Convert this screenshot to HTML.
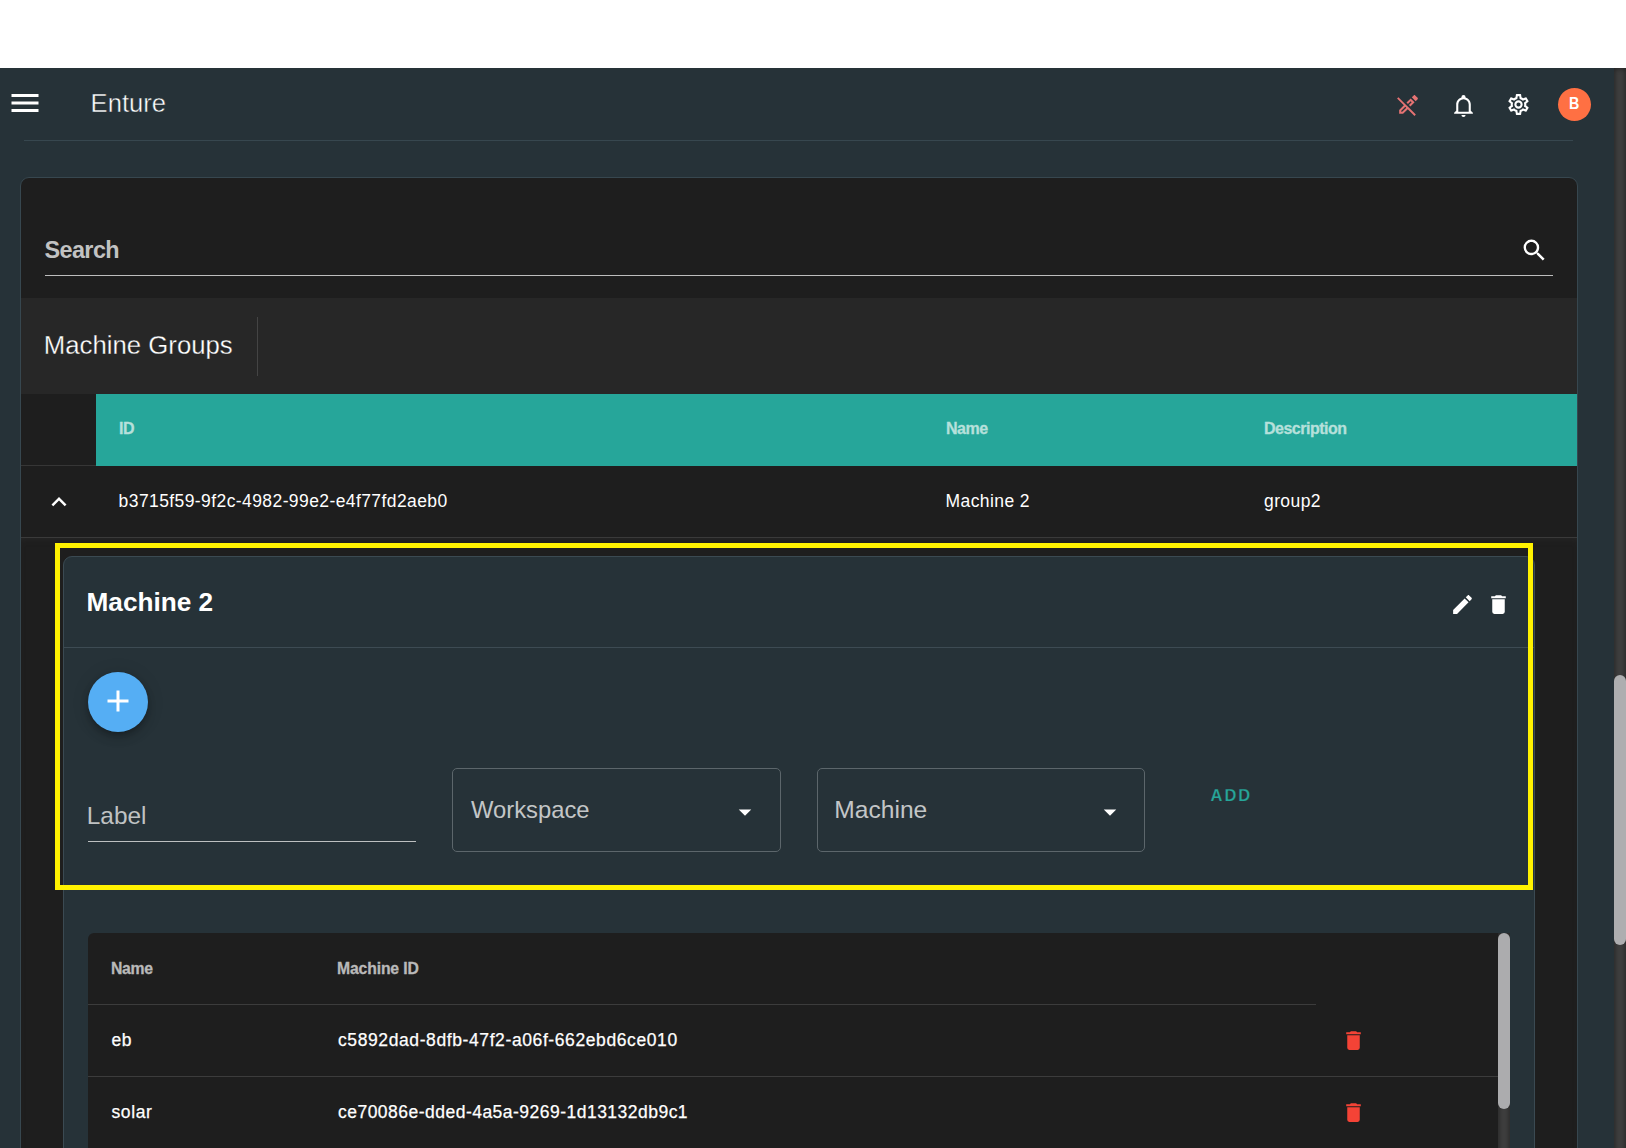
<!DOCTYPE html>
<html><head><meta charset="utf-8">
<style>
*{box-sizing:border-box;margin:0;padding:0}
html,body{width:1626px;height:1148px;overflow:hidden;background:#fff;font-family:"Liberation Sans",sans-serif;}
.abs{position:absolute}
#app{position:absolute;left:0;top:68px;width:1626px;height:1080px;background:#263238;overflow:hidden}
.t{position:absolute;white-space:nowrap;line-height:1}
svg{position:absolute;display:block}
</style></head><body>
<div id="app"></div>

<!-- page scrollbar -->
<div class="abs" id="ptrack" style="left:1614px;top:68px;width:12px;height:1090px;background:#3f3f3f;box-shadow:inset 0 0 6px rgba(0,0,0,.55)"></div>
<div class="abs" id="pthumb" style="left:1614px;top:675px;width:12px;height:270px;background:#aeaeb0;border-radius:6px"></div>

<!-- app bar -->
<svg id="i_menu" style="left:7.1px;top:85.1px" width="36" height="36" viewBox="0 0 24 24"><path fill="#fff" d="M3,6H21V8H3V6M3,11H21V13H3V11M3,16H21V18H3V16Z"/></svg>
<div class="t" id="enture" style="-webkit-text-stroke:.45px #263238;left:90.6px;top:90.5px;font-size:25.6px;color:#fff">Enture</div>
<div class="abs" style="left:24px;top:140px;width:1549px;height:1px;background:#37474f"></div>

<!-- main card -->
<div class="abs" id="card" style="left:20px;top:177px;width:1558px;height:980px;background:#1e1e1e;border:1px solid #37474f;border-radius:9px;overflow:hidden"></div>
<div class="t" id="search" style="left:44.4px;top:238.7px;font-size:23.4px;letter-spacing:-.55px;font-weight:bold;color:#c2c2c2">Search</div>
<div class="abs" style="left:45px;top:275px;width:1508px;height:1px;background:#bdbdbd"></div>

<!-- toolbar -->
<div class="abs" style="left:21px;top:298px;width:1556px;height:96px;background:#272727"></div>
<div class="t" id="mg" style="-webkit-text-stroke:.3px #272727;left:43.8px;top:332.7px;font-size:25.76px;color:#fff">Machine Groups</div>
<div class="abs" style="left:257px;top:317px;width:1px;height:59px;background:#444"></div>

<!-- table header -->
<div class="abs" style="left:96px;top:394px;width:1481px;height:72px;background:#26a69a"></div>
<div class="t" id="th1" style="-webkit-text-stroke:.3px #b6e0db;left:119px;top:420.6px;font-size:16px;letter-spacing:-.5px;font-weight:bold;color:#b6e0db">ID</div>
<div class="t" id="th2" style="-webkit-text-stroke:.3px #b6e0db;left:946px;top:420.6px;font-size:16px;letter-spacing:-.5px;font-weight:bold;color:#b6e0db">Name</div>
<div class="t" id="th3" style="-webkit-text-stroke:.3px #b6e0db;left:1264px;top:420.6px;font-size:16px;letter-spacing:-.5px;font-weight:bold;color:#b6e0db">Description</div>

<!-- row -->
<div class="t" id="rid" style="left:118.6px;top:492.5px;font-size:17.5px;letter-spacing:.41px;color:#fff">b3715f59-9f2c-4982-99e2-e4f77fd2aeb0</div>
<div class="t" id="rn" style="left:945.6px;top:492.5px;font-size:17.5px;letter-spacing:.4px;color:#fff">Machine 2</div>
<div class="t" id="rd" style="left:1264px;top:492.5px;font-size:17.5px;letter-spacing:.4px;color:#fff">group2</div>
<div class="abs" style="left:21px;top:537px;width:1556px;height:1px;background:#3a3a3a"></div>
<div class="abs" style="left:21px;top:465px;width:75px;height:1px;background:#363636"></div>


<!-- chevron up -->
<svg style="left:43.6px;top:487.4px" width="30" height="30" viewBox="0 0 24 24"><path fill="#fff" d="M7.41,15.41L12,10.83L16.59,15.41L18,14L12,8L6,14L7.41,15.41Z"/></svg>

<!-- expanded cell bg -->
<div class="abs" style="left:21px;top:538px;width:1556px;height:640px;box-shadow:inset 0 4px 8px -5px rgba(50,50,50,.75)"></div>
<div class="abs" id="inner" style="left:63px;top:556px;width:1472px;height:620px;background:#263238;border:1px solid #3b4a52;border-radius:9px"></div>
<div class="t" id="m2" style="left:86.5px;top:589px;font-size:26.2px;font-weight:bold;color:#fff">Machine 2</div>
<svg style="left:1449.5px;top:591.5px" width="25" height="25" viewBox="0 0 24 24"><path fill="#fff" d="M20.71,7.04C21.1,6.65 21.1,6 20.71,5.63L18.37,3.29C18,2.9 17.35,2.9 16.96,3.29L15.12,5.12L18.87,8.87M3,17.25V21H6.75L17.81,9.93L14.06,6.18L3,17.25Z"/></svg>
<svg style="left:1485.5px;top:591.5px" width="25" height="25" viewBox="0 0 24 24"><path fill="#fff" d="M19,4H15.5L14.5,3H9.5L8.5,4H5V6H19M6,19A2,2 0 0,0 8,21H16A2,2 0 0,0 18,19V7H6V19Z"/></svg>
<div class="abs" style="left:64px;top:647px;width:1470px;height:1px;background:#3d4b53"></div>

<!-- FAB -->
<div class="abs" style="left:88px;top:672px;width:60px;height:60px;border-radius:50%;background:#55aef4;box-shadow:0 3px 5px -1px rgba(0,0,0,.2),0 6px 10px 0 rgba(0,0,0,.14),0 1px 18px 0 rgba(0,0,0,.12)"></div>
<svg style="left:100px;top:683.1px" width="36" height="36" viewBox="0 0 24 24"><path fill="#fff" d="M19,13H13V19H11V13H5V11H11V5H13V11H19V13Z"/></svg>

<!-- Label field -->
<div class="t" id="lbl" style="left:86.8px;top:804px;font-size:24.4px;color:#bfc2c3">Label</div>
<div class="abs" style="left:88px;top:841px;width:328px;height:1px;background:#bdc0c1"></div>

<!-- selects -->
<div class="abs" style="left:452px;top:768px;width:329px;height:84px;border:1px solid #5c666b;border-radius:5px"></div>
<div class="t" id="ws" style="left:471px;top:798px;font-size:23.8px;color:#c3c6c7">Workspace</div>
<svg style="left:730.1px;top:797px" width="30" height="30" viewBox="0 0 24 24"><path fill="#fff" d="M7,10L12,15L17,10H7Z"/></svg>
<div class="abs" style="left:817px;top:768px;width:328px;height:84px;border:1px solid #5c666b;border-radius:5px"></div>
<div class="t" id="mc" style="left:834.3px;top:798px;font-size:24.6px;color:#c3c6c7">Machine</div>
<svg style="left:1094.8px;top:797px" width="30" height="30" viewBox="0 0 24 24"><path fill="#fff" d="M7,10L12,15L17,10H7Z"/></svg>
<div class="t" id="add" style="-webkit-text-stroke:.25px #263238;left:1210.5px;top:787px;font-size:16.5px;font-weight:bold;letter-spacing:2px;color:#26a69a">ADD</div>

<!-- inner table -->
<div class="abs" style="left:88px;top:933px;width:1422px;height:230px;background:#1e1e1e;border-radius:6px 6px 0 0"></div>
<div class="t" id="hn" style="-webkit-text-stroke:.3px #b9b9b9;left:111px;top:960.5px;font-size:15.75px;letter-spacing:-.3px;font-weight:bold;color:#b9b9b9">Name</div>
<div class="t" id="hm" style="-webkit-text-stroke:.3px #b9b9b9;left:337px;top:960.5px;font-size:15.75px;letter-spacing:-.15px;font-weight:bold;color:#b9b9b9">Machine ID</div>
<div class="abs" style="left:88px;top:1004px;width:1228px;height:1px;background:#3c3c3c"></div>
<div class="t" id="r1a" style="left:111.5px;top:1032px;font-size:17.5px;letter-spacing:.6px;-webkit-text-stroke:.25px #fff;color:#fff">eb</div>
<div class="t" id="r1b" style="left:338px;top:1032px;font-size:17.5px;letter-spacing:.6px;-webkit-text-stroke:.25px #fff;color:#fff">c5892dad-8dfb-47f2-a06f-662ebd6ce010</div>
<svg style="left:1340.7px;top:1028.4px" width="25" height="25" viewBox="0 0 24 24"><path fill="#f44336" d="M19,4H15.5L14.5,3H9.5L8.5,4H5V6H19M6,19A2,2 0 0,0 8,21H16A2,2 0 0,0 18,19V7H6V19Z"/></svg>
<div class="abs" style="left:88px;top:1076px;width:1410px;height:1px;background:#3c3c3c"></div>
<div class="t" id="r2a" style="left:111.5px;top:1104px;font-size:17.5px;letter-spacing:.6px;-webkit-text-stroke:.25px #fff;color:#fff">solar</div>
<div class="t" id="r2b" style="left:338px;top:1104px;font-size:17.5px;letter-spacing:.48px;-webkit-text-stroke:.25px #fff;color:#fff">ce70086e-dded-4a5a-9269-1d13132db9c1</div>
<svg style="left:1340.7px;top:1100.4px" width="25" height="25" viewBox="0 0 24 24"><path fill="#f44336" d="M19,4H15.5L14.5,3H9.5L8.5,4H5V6H19M6,19A2,2 0 0,0 8,21H16A2,2 0 0,0 18,19V7H6V19Z"/></svg>
<!-- inner scrollbar -->
<div class="abs" style="left:1498px;top:933px;width:12px;height:240px;background:#3f3f3f;box-shadow:inset 0 0 6px rgba(0,0,0,.55)"></div>
<div class="abs" style="left:1498px;top:933px;width:12px;height:176px;background:#acacae;border-radius:6px"></div>

<!-- yellow highlight -->
<div class="abs" style="left:55px;top:543px;width:1478px;height:347px;border:5px solid #fff200"></div>

<!-- app bar icons -->
<svg id="i_pen" style="left:1394.8px;top:93.2px" width="25" height="25" viewBox="0 0 24 24"><path fill="#e57373" fill-rule="evenodd" d="M18.66,2C18.4,2 18.16,2.09 17.97,2.28L16.13,4.13L19.88,7.88L21.72,6.03C22.11,5.64 22.11,5 21.72,4.63L19.38,2.28C19.18,2.09 18.91,2 18.66,2M3.28,4L2,5.28L8.5,11.75L4,16.25V20H7.75L12.25,15.5L18.72,22L20,20.72L13.5,14.25L9.75,10.5L3.28,4M15.06,5.19L11.03,9.22L12.44,10.63L15.06,8L16,8.94L13.38,11.57L14.78,12.97L18.81,8.94L15.06,5.19M9.91,13.16L10.84,14.09L6.91,18H6V17.09L9.91,13.16Z"/></svg>
<svg id="i_bell" style="left:1451.1px;top:92.7px" width="25" height="25" viewBox="0 0 24 24"><path fill="#fff" d="M10,21H14A2,2 0 0,1 12,23A2,2 0 0,1 10,21M21,19V20H3V19L5,17V11C5,7.9 7.03,5.17 10,4.29C10,4.19 10,4.1 10,4A2,2 0 0,1 12,2A2,2 0 0,1 14,4C14,4.1 14,4.19 14,4.29C16.97,5.17 19,7.9 19,11V17L21,19M17,11A5,5 0 0,0 12,6A5,5 0 0,0 7,11V18H17V11Z"/></svg>
<svg id="i_cog" style="left:1506.4px;top:92.2px" width="25" height="25" viewBox="0 0 24 24"><path fill="#fff" d="M12,8A4,4 0 0,1 16,12A4,4 0 0,1 12,16A4,4 0 0,1 8,12A4,4 0 0,1 12,8M12,10A2,2 0 0,0 10,12A2,2 0 0,0 12,14A2,2 0 0,0 14,12A2,2 0 0,0 12,10M10,22C9.75,22 9.54,21.82 9.5,21.58L9.13,18.93C8.5,18.68 7.96,18.34 7.44,17.94L4.95,18.95C4.73,19.03 4.46,18.95 4.34,18.73L2.34,15.27C2.21,15.05 2.27,14.78 2.46,14.63L4.57,12.97L4.5,12L4.57,11L2.46,9.37C2.27,9.22 2.21,8.95 2.34,8.73L4.34,5.27C4.46,5.05 4.73,4.96 4.95,5.05L7.44,6.05C7.96,5.66 8.5,5.32 9.13,5.07L9.5,2.42C9.54,2.18 9.75,2 10,2H14C14.25,2 14.46,2.18 14.5,2.42L14.87,5.07C15.5,5.32 16.04,5.66 16.56,6.05L19.05,5.05C19.27,4.96 19.54,5.05 19.66,5.27L21.66,8.73C21.79,8.95 21.73,9.22 21.54,9.37L19.43,11L19.5,12L19.43,13L21.54,14.63C21.73,14.78 21.79,15.05 21.66,15.27L19.66,18.73C19.54,18.95 19.27,19.04 19.05,18.95L16.56,17.95C16.04,18.34 15.5,18.68 14.87,18.93L14.5,21.58C14.46,21.82 14.25,22 14,22H10M11.25,4L10.88,6.61C9.68,6.86 8.62,7.5 7.85,8.39L5.44,7.35L4.69,8.65L6.8,10.2C6.4,11.37 6.4,12.64 6.8,13.8L4.68,15.36L5.43,16.66L7.86,15.62C8.63,16.5 9.68,17.14 10.87,17.38L11.24,20H12.76L13.13,17.39C14.32,17.14 15.37,16.5 16.14,15.62L18.57,16.66L19.32,15.36L17.2,13.81C17.6,12.64 17.6,11.37 17.2,10.2L19.31,8.65L18.56,7.35L16.15,8.39C15.38,7.5 14.32,6.86 13.12,6.62L12.75,4H11.25Z"/></svg>
<div class="abs" style="left:1558px;top:88px;width:33px;height:33px;border-radius:50%;background:#ff7043"></div>
<div class="t" id="avb" style="left:1568.8px;top:96.3px;font-size:16.6px;transform:scaleX(.86);transform-origin:0 0;font-weight:bold;color:#fff">B</div>
<!-- search icon -->
<svg id="i_search" style="left:1520.4px;top:235.6px" width="28.8" height="28.8" viewBox="0 0 24 24"><path fill="#fff" d="M9.5,3A6.5,6.5 0 0,1 16,9.5C16,11.11 15.41,12.59 14.44,13.73L14.71,14H15.5L20.5,19L19,20.5L14,15.5V14.71L13.73,14.44C12.59,15.41 11.11,16 9.5,16A6.5,6.5 0 0,1 3,9.5A6.5,6.5 0 0,1 9.5,3M9.5,5C7,5 5,7 5,9.5C5,12 7,14 9.5,14C12,14 14,12 14,9.5C14,7 12,5 9.5,5Z"/></svg>

</body></html>
